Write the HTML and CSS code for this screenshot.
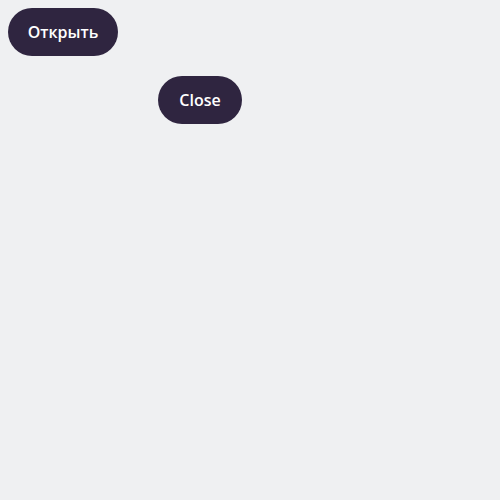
FILE: index.html
```html
<!DOCTYPE html>
<html>
<head>
<meta charset="utf-8">
<link rel="stylesheet" href="styles.css">
</head>
<body>
<button class="btn btn-open">Открыть</button>
<div class="dialog">
  <button class="btn btn-close">Close</button>
</div>
</body>
</html>
```
FILE: styles.css
```css
html, body { background: #eff0f2; }
body { margin: 8px; font-family: "Open Sans", sans-serif; }
.btn {
  display: block;
  height: 48px;
  padding: 0 20px;
  border: none;
  border-radius: 24px;
  background: #2f2540;
  color: #ffffff;
  font-family: "Open Sans", sans-serif;
  font-weight: 600;
  font-size: 16px;
  cursor: pointer;
}
.btn-open { width: 110px; padding: 0; }
.btn-close { width: 84px; padding: 0; }
.dialog { padding: 20px 0 0 150px; }
```
